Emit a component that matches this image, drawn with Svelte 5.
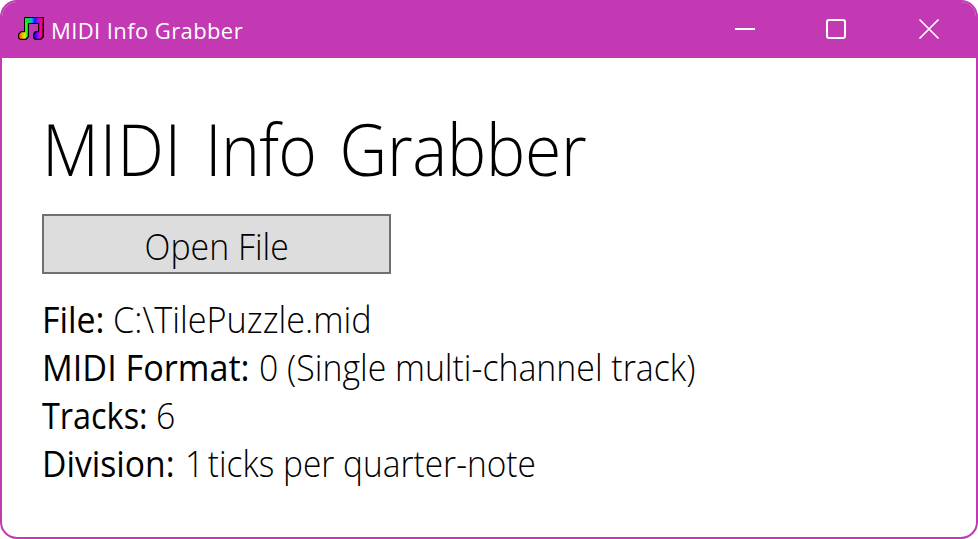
<script>
  const rows = [
    { key: 'file', label: 'File:', lead: '', value: 'C:\\TilePuzzle.mid' },
    { key: 'format', label: 'MIDI Format:', lead: '', value: '0 (Single multi-channel track)' },
    { key: 'tracks', label: 'Tracks:', lead: '', value: '6' },
    { key: 'division', label: 'Division:', lead: '1', value: 'ticks per quarter-note' }
  ];
</script>

<div class="window">
  <header>
    <svg class="logo" width="26" height="23" viewBox="0 0 26 23">
      <defs>
        <linearGradient id="rainbow" gradientUnits="userSpaceOnUse" x1="1" y1="0" x2="25" y2="0">
          <stop offset="0" stop-color="#ff5000" />
          <stop offset=".15" stop-color="#ffb000" />
          <stop offset=".24" stop-color="#e8f000" />
          <stop offset=".32" stop-color="#20ff20" />
          <stop offset=".46" stop-color="#00f060" />
          <stop offset=".56" stop-color="#00b0ff" />
          <stop offset=".66" stop-color="#1000ff" />
          <stop offset=".8" stop-color="#b000ff" />
          <stop offset=".9" stop-color="#ff00a0" />
          <stop offset="1" stop-color="#ff0040" />
        </linearGradient>
        <linearGradient id="beam" gradientUnits="userSpaceOnUse" x1="7" y1="0" x2="24" y2="0">
          <stop offset="0" stop-color="#10f020" />
          <stop offset=".2" stop-color="#00e040" />
          <stop offset=".4" stop-color="#00b0ff" />
          <stop offset=".58" stop-color="#2010ff" />
          <stop offset=".78" stop-color="#c000f0" />
          <stop offset="1" stop-color="#ff0070" />
        </linearGradient>
      </defs>
      <path d="M6 0H26V20L23 23H17L15 21V17L17 14H20V7H11V20L8 23H2L0 21V17L3 14H6Z" fill="#000" />
      <path d="M7.2 1.2H24.5V19.5L22 21.8H17.5L16.2 20.5V17.3L18 15.2H21.2V5.8H9.8V19.5L7.3 21.8H2.5L1.2 20.5V17.3L3.3 15.2H7.2Z" fill="url(#rainbow)" />
      <path d="M7.2 1.2H24.5V5.8H7.2Z" fill="url(#beam)" />
    </svg>
    <span class="caption">MIDI Info Grabber</span>
    <div class="controls">
      <svg width="22" height="22" viewBox="0 0 22 22"><path d="M1 11H21" /></svg>
      <svg width="22" height="22" viewBox="0 0 22 22"><rect x="1" y="2" width="18" height="18" rx="2" /></svg>
      <svg width="22" height="22" viewBox="0 0 22 22"><path class="thin" d="M1.5 1.5 20.5 20.5M20.5 1.5 1.5 20.5" /></svg>
    </div>
  </header>
  <main>
    <h1><span class="wide">MIDI</span> <span class="tight">Info</span> <span class="close">Grabber</span></h1>
    <button><span>Open File</span></button>
    <div class="info">
      {#each rows as row (row.key)}
        <div class="row {row.key}"><b>{row.label}</b><div class="value">{#if row.lead}<span class="lead">{row.lead}</span>{/if}<span>{row.value}</span></div></div>
      {/each}
    </div>
  </main>
</div>

<style>
  :global(body) { margin: 0; background: #fff; }
  .window {
    box-sizing: border-box;
    width: 978px;
    height: 539px;
    overflow: hidden;
    border: 2px solid #c239b3;
    border-radius: 17px;
    background: #fff;
    color: #000;
    font-family: "Open Sans", "Liberation Sans", sans-serif;
  }
  header {
    display: flex;
    align-items: center;
    height: 56px;
    padding-left: 16px;
    background: #c239b3;
    color: #fff;
  }
  .logo { flex: none; margin-top: -3px; }
  .caption { margin-left: 7px; font-size: 22px; line-height: 30px; letter-spacing: .4px; white-space: nowrap; }
  .controls { display: flex; gap: 70px; margin: -2px 36px 0 auto; }
  .controls svg { fill: none; stroke: #fff; stroke-width: 2; display: block; }
  .controls .thin { stroke-width: 1.7; }
  main { padding: 43px 40px 0; }
  h1 {
    margin: 0;
    font-size: 71px;
    font-weight: 300;
    line-height: 96px;
    white-space: nowrap;
    word-spacing: 6.5px;
    transform: scaleX(.93);
    transform-origin: 0 0;
  }
  .wide { letter-spacing: .8px; }
  .tight { letter-spacing: -.8px; }
  .close { letter-spacing: -.3px; }
  button {
    display: flex;
    align-items: center;
    justify-content: center;
    box-sizing: border-box;
    width: 349px;
    height: 60px;
    margin: 17px 0 0;
    padding: 4px 0 0;
    border: 2px solid #707070;
    background: #ddd;
    color: #000;
    font: 300 36px "Open Sans", sans-serif;
  }
  button span { transform: scaleX(.94); }
  .info { margin-top: 22px; font-size: 36px; line-height: 48px; }
  .row { display: flex; white-space: nowrap; font-weight: 300; }
  b, .value { transform: scaleX(.94); transform-origin: 0 0; }
  b { font-weight: 400; margin-right: 5px; }
  .value { display: flex; }
  .file .value { transform: scaleX(.953); }
  .format b { margin-right: -2px; transform: scaleX(.95); }
  .tracks b { margin-right: -3px; transform: scaleX(.9); }
  .division b { margin-right: 1px; transform: scaleX(.935); }
  .division .value { transform: scaleX(.93); }
  .lead { margin-right: 4px; }
</style>
